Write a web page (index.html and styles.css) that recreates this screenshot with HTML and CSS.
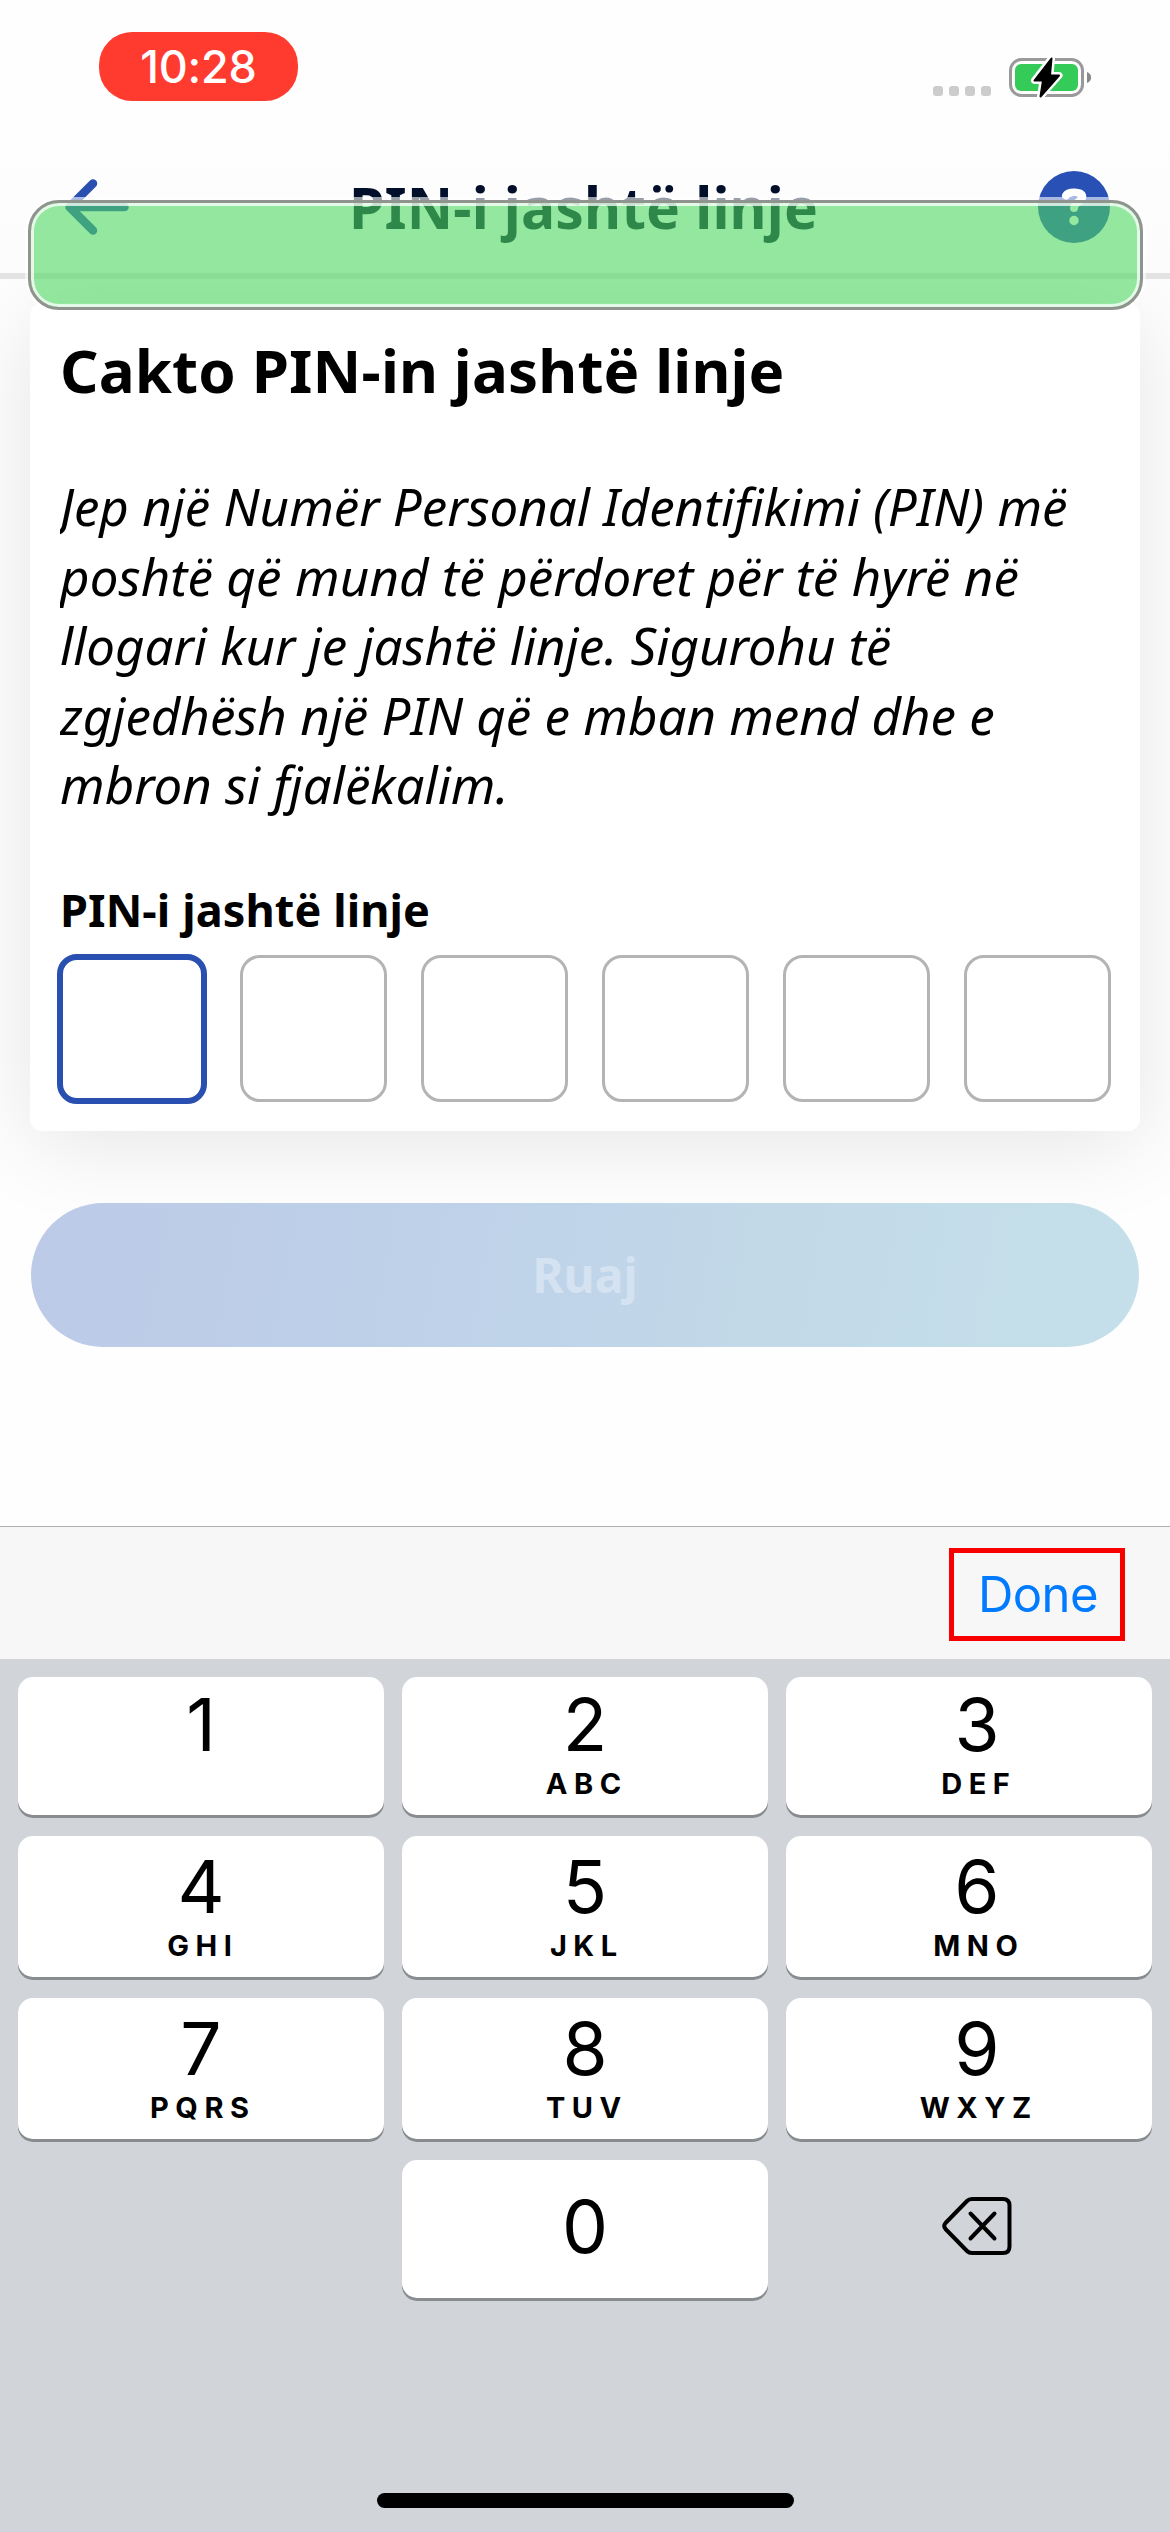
FILE: index.html
```html
<!DOCTYPE html>
<html lang="sq">
<head>
<meta charset="utf-8">
<title>PIN-i jashtë linje</title>
<link rel="stylesheet" href="styles.css">
</head>
<body>
<div class="screen">
  <div class="status">
    <div class="time">10:28</div>
    <div class="indicators">
      <div class="dots"><i></i><i></i><i></i><i></i></div>
      <svg class="battery" width="84" height="44" viewBox="0 0 84 44">
        <rect x="2.500" y="4.500" width="72" height="36" rx="11" fill="none" stroke="#999" stroke-width="3"/>
        <rect x="7" y="9" width="63" height="27" rx="6" fill="#34cb58"/>
        <path d="M79 17c5.500 2 5.500 9 0 11z" fill="#888"/>
        <path d="M43.500 3.500 26.500 25.500H35L32.500 41.500 51 20.500H42z" fill="#000" stroke="#fff" stroke-width="7" stroke-linejoin="round"/>
        <path d="M43.500 3.500 26.500 25.500H35L32.500 41.500 51 20.500H42z" fill="#000" stroke="#000" stroke-width="2" stroke-linejoin="round"/>
      </svg>
    </div>
  </div>
  <header class="header">
    <svg class="back" width="64" height="56" viewBox="0 0 64 56"><path d="M28 4.500 4.500 28 28 51.500M5 28h54.500" fill="none" stroke="#2950b0" stroke-width="8.500" stroke-linecap="round" stroke-linejoin="round"/></svg>
    <h1 class="title">PIN-i jashtë linje</h1>
    <svg class="help" width="72" height="72" viewBox="0 0 72 72"><circle cx="36" cy="36" r="36" fill="#2950b4"/><path d="M28 24.500C30 20.500 44 20 44.300 25.500 44.500 31 36 30.500 36 37" fill="none" stroke="#fff" stroke-width="8" stroke-linecap="round"/><circle cx="36" cy="49.500" r="4.700" fill="#fff"/></svg>
  </header>
  <div class="banner"></div>
  <main class="content">
    <section class="card">
      <h2 class="heading">Cakto PIN-in jashtë linje</h2>
      <p class="intro">Jep një Numër Personal Identifikimi (PIN) më<br><span class="wide">poshtë që mund të përdoret për të hyrë në</span><br>llogari kur je jashtë linje. Sigurohu të<br>zgjedhësh një PIN që e mban mend dhe e<br>mbron si fjalëkalim.</p>
      <div class="label">PIN-i jashtë linje</div>
      <div class="pins">
        <span class="pin active"></span><span class="pin"></span><span class="pin"></span><span class="pin"></span><span class="pin"></span><span class="pin"></span>
      </div>
    </section>
    <div class="save">Ruaj</div>
  </main>
  <div class="toolbar"><div class="done">Done</div></div>
  <div class="keyboard">
    <div class="keys">
      <div class="key top">1</div>
      <div class="key top">2<span class="abc">ABC</span></div>
      <div class="key top right">3<span class="abc">DEF</span></div>
      <div class="key">4<span class="abc">GHI</span></div>
      <div class="key">5<span class="abc">JKL</span></div>
      <div class="key right">6<span class="abc">MNO</span></div>
      <div class="key">7<span class="abc">PQRS</span></div>
      <div class="key">8<span class="abc">TUV</span></div>
      <div class="key right">9<span class="abc">WXYZ</span></div>
      <div class="blank"></div>
      <div class="key zero">0</div>
      <div class="erase">
        <svg width="70" height="60" viewBox="0 0 70 60" fill="none" stroke="#000" stroke-width="4" stroke-linecap="round" stroke-linejoin="round"><path d="M30 3H61Q67.500 3 67.500 9.500V50.500Q67.500 57 61 57H30Q27 57 25 55L3.500 33Q1 30 3.500 27L25 5Q27 3 30 3Z"/><path d="M28.500 17.500 52.500 42.500M52.500 17.500 28.500 42.500"/></svg>
      </div>
    </div>
    <div class="home"></div>
  </div>
</div>
</body>
</html>
```
FILE: styles.css
```css
* { box-sizing: border-box; }
body { margin: 0; background: #fefefe; }
h1, h2, p { margin: 0; }

.screen {
  position: relative;
  display: flex;
  flex-direction: column;
  width: 1170px;
  height: 2532px;
  overflow: hidden;
  font-family: "Noto Sans", sans-serif;
  color: #000;
}

/* Status bar */
.status {
  display: flex;
  justify-content: space-between;
  align-items: flex-start;
  height: 141px;
  padding: 32px 78px 0 99px;
  background: #fefefe;
  z-index: 1;
}
.time {
  width: 199px;
  height: 69px;
  border-radius: 33px;
  background: #ff3b30;
  color: #fff;
  font: 500 45px/69px Inter, sans-serif;
  letter-spacing: -0.2px;
  text-align: center;
}
.indicators { display: flex; align-items: flex-start; gap: 17px; padding-top: 23px; }
.dots { display: flex; gap: 6px; padding-top: 31px; }
.dots i { width: 10px; height: 10px; border-radius: 3px; background: #ccc; }

/* Navigation header */
.header {
  display: flex;
  justify-content: space-between;
  align-items: center;
  height: 138px;
  padding: 0 60px 0 65px;
  border-bottom: 6px solid #e3e3e3;
  background: linear-gradient(#fefefe, #fcfcfc);
  z-index: 1;
}
.title { font-size: 57px; line-height: 78px; font-weight: 700; letter-spacing: 0.15px; color: #020f2a; }

/* Translucent notification strip over the header */
.banner {
  position: absolute;
  left: 28px;
  top: 200px;
  width: 1115px;
  height: 110px;
  border: 3px solid #8f948f;
  border-radius: 31px;
  background: rgba(77, 217, 97, 0.6);
  box-shadow: 0 0 0 3px rgba(255, 255, 255, 0.6), inset 0 0 0 3px rgba(255, 255, 255, 0.75);
  z-index: 2;
}

/* Form */
.content { height: 1247px; padding: 24px 30px 0; }
.card {
  height: 828px;
  padding: 26px 27px 0 30px;
  border-radius: 12px;
  background: #fff;
  box-shadow: 0 12px 90px rgba(0, 0, 0, 0.1);
}
.heading { font-size: 60px; line-height: 82px; font-weight: 700; letter-spacing: 0.15px; }
.intro {
  margin-top: 61px;
  font-size: 51px;
  line-height: 69.6px;
  font-style: italic;
  white-space: nowrap;
  overflow: hidden;
}
.wide { letter-spacing: 0.13px; }
.label { margin-top: 60px; font-size: 45px; line-height: 60px; font-weight: 700; letter-spacing: 0.1px; }
.pins {
  display: flex;
  justify-content: space-between;
  align-items: center;
  height: 150px;
  margin: 14px 1.5px 0 -1.5px;
}
.pin { width: 147px; height: 147px; border: 3px solid #b4b4b4; border-radius: 20px; background: #fff; }
.pin.active { width: 150px; height: 150px; margin: 0 -1.5px; border: 6px solid #2950b0; }
.save {
  height: 144px;
  margin: 72px 1px 0;
  border-radius: 72px;
  background: linear-gradient(100deg, #bccae7, #bfd3e9 45%, #c2d9e8 65%, #c5e0ea);
  color: #d4e2f1;
  font-size: 48px;
  line-height: 144px;
  font-weight: 700;
  text-align: center;
}

/* Keyboard accessory bar */
.toolbar {
  display: flex;
  justify-content: flex-end;
  align-items: flex-start;
  height: 133px;
  padding: 21px 45px 0 0;
  border-top: 1px solid #b0b0b0;
  background: #f7f7f7;
  z-index: 1;
}
.done {
  width: 176px;
  height: 93px;
  padding-left: 2px;
  border: 5px solid #f80000;
  color: #007aff;
  font: 400 49px/83px Inter, sans-serif;
  letter-spacing: -0.6px;
  text-align: center;
}

/* Numeric keypad */
.keyboard { height: 873px; padding: 18px 18px 0; background: #d1d4d9; z-index: 1; }
.keys {
  display: grid;
  grid-template-columns: repeat(3, 366px);
  grid-template-rows: 138px 141px 141px 138px;
  gap: 21px 18px;
}
.key {
  display: flex;
  flex-direction: column;
  align-items: center;
  padding-top: 7px;
  border-radius: 15px;
  background: #fff;
  box-shadow: 0 3px 0 #898c8f;
  font: 400 73px/88px Inter, sans-serif;
}
.key.top { padding-top: 4px; }
.key.right { padding-left: 16px; }
.key.zero { justify-content: center; padding: 0 0 5px; }
.abc { font-size: 29px; line-height: 30px; font-weight: 700; letter-spacing: 6.5px; margin-right: -3.5px; }
.erase { display: flex; align-items: center; justify-content: center; padding: 0 0 7px 16px; }
.home { width: 417px; height: 15px; margin: 195px auto 0; border-radius: 8px; background: #000; }
```
